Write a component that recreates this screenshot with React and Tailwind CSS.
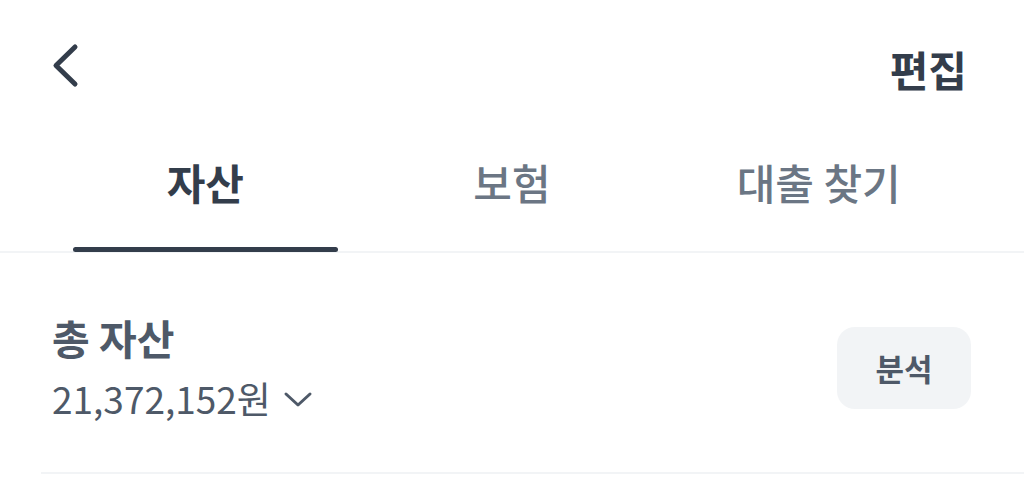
export default function App() {
  const font = { fontFamily: '"Noto Sans CJK KR", "Noto Sans", sans-serif' };
  return (
    <div className="w-[1024px] h-[478px] bg-white overflow-hidden" style={font}>
      <header className="h-[140px] flex items-center justify-between pl-[50px] pr-[57px] pb-[2px]">
        <svg width="32" height="48" viewBox="0 0 32 48" fill="none" className="-mt-[6px]">
          <path d="M25 5 L6 23.5 L25 42" stroke="#333d4b" strokeWidth="5" strokeLinecap="round" strokeLinejoin="round" />
        </svg>
        <span className="text-[42px] font-bold text-[#333d4b] leading-none">편집</span>
      </header>
      <nav className="relative flex px-[52px] border-b-2 border-[#f2f4f6]">
        {["자산", "보험", "대출 찾기"].map((t, i) => (
          <div key={t} className="relative flex-1 flex justify-center h-[111px] pt-[16px]">
            <span className={`text-[42px] leading-[52px] ${i === 0 ? "font-bold text-[#333d4b]" : "font-medium text-[#6b7684]"}`}>{t}</span>
            {i === 0 && <div className="absolute left-[21px] right-[21px] bottom-[-1px] h-[5px] rounded-full bg-[#333d4b]" />}
          </div>
        ))}
      </nav>
      <section className="h-[219px] flex items-start justify-between pl-[52px] pr-[53px] pt-[60px]">
        <div className="flex flex-col">
          <span className="text-[41px] font-bold text-[#4e5968] leading-[48px]">총 자산</span>
          <div className="flex items-center mt-[15px]">
            <span className="text-[37px] text-[#4e5968] leading-[44px]">21,372,152원</span>
            <svg width="30" height="20" viewBox="0 0 30 20" fill="none" className="ml-[12px] mt-[2px]">
              <path d="M3 5 L15 16 L27 5" stroke="#4e5968" strokeWidth="3" strokeLinecap="round" strokeLinejoin="round" />
            </svg>
          </div>
        </div>
        <button className="w-[134px] h-[82px] mt-[14px] rounded-[18px] bg-[#f2f4f6] text-[31px] font-semibold text-[#4e5968] flex items-center justify-center">분석</button>
      </section>
      <div className="ml-[41px] h-[2px] bg-[#f2f4f6]" />
    </div>
  );
}
